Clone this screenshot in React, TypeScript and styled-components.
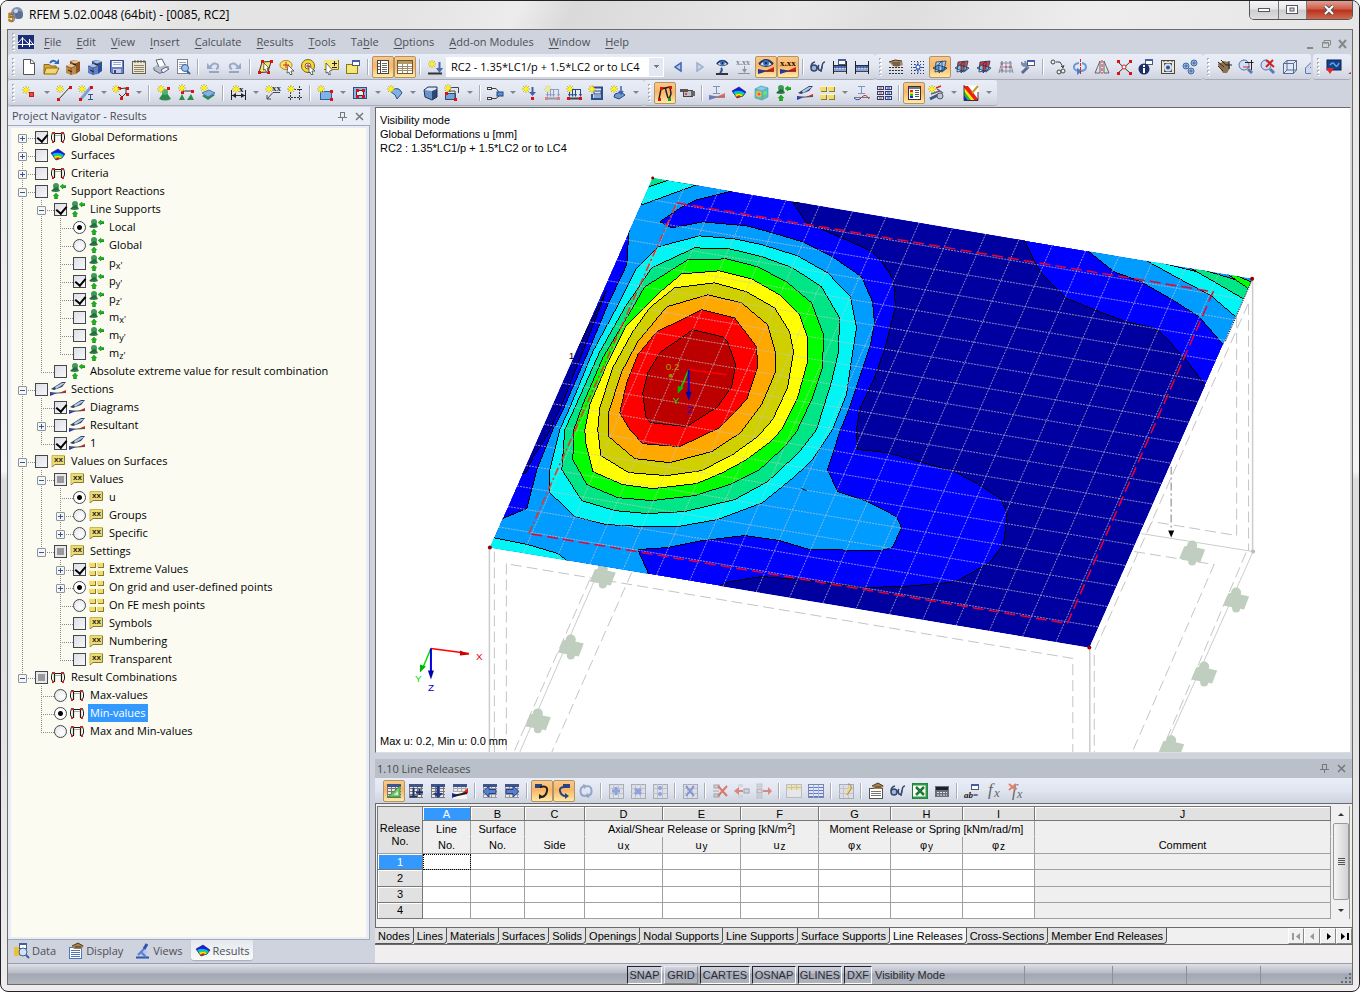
import React, { ReactNode } from "react";
import styled, { createGlobalStyle, css } from "styled-components";

const UI = `"Open Sans", "Noto Sans", sans-serif`;
const ARIAL = `"Liberation Sans", Arial, sans-serif`;

const Global = createGlobalStyle`
  * { box-sizing: border-box; }
  html, body { margin: 0; padding: 0; background: #fff; }
  body { font: 11px/16px ${UI}; color: #000; }
  button { font: inherit; color: inherit; padding: 0; border: 0; background: none; }
`;

/* ---------- drawing helpers for 16x16 icons ---------- */
const P = (d: string, s = "#333", w = 1, f = "none") => <path d={d} stroke={s} strokeWidth={w} fill={f} />;
const F = (d: string, f: string) => <path d={d} fill={f} />;
const R = (x: number, y: number, w: number, h: number, f: string, s = "none") => (
  <rect x={x} y={y} width={w} height={h} fill={f} stroke={s} />
);
const C = (x: number, y: number, r: number, f: string, s = "none", w = 1) => (
  <circle cx={x} cy={y} r={r} fill={f} stroke={s} strokeWidth={w} />
);
const T = (t: string, x: number, y: number, f = "#333", size = 8, extra = {}) => (
  <text x={x} y={y} fill={f} fontSize={size} fontFamily="Liberation Serif, serif" fontWeight="bold" {...extra}>{t}</text>
);
const star = (x = 4, y = 4) => (
  <g transform={`translate(${x} ${y})`}>
    {P("M0-4V4M-4 0H4M-3-3L3 3M3-3L-3 3", "#c4b41c", 1)}
    {C(0, 0, 2, "#fff21a")}
    {P("M0-3V3M-3 0H3", "#fff21a", 1)}
  </g>
);
const dot = (x: number, y: number) => R(x - 1, y - 1, 3, 3, "#e01010");
const wedge = (
  <g>
    {F("M0 15V10L8 11.500V12.500Z", "#1c2fc4")}
    {F("M7 12L16 8V13L7 13Z", "#e02020")}
    {P("M0 13L16 11", "#443", 1)}
  </g>
);
const eye = (
  <g>
    {F("M1 6Q8-2 15 6Q8 12 1 6", "#dfeaf8")}
    {P("M1 6Q8-2 15 6", "#1b3566", 2)}
    {P("M1 6Q8 11 15 6", "#1b3566")}
    {C(8, 5, 3, "#3c6fb8")}
    {C(8, 5, 1, "#0a1430")}
  </g>
);
const gridBase = (c = "#777") => (
  <g shapeRendering="crispEdges">
    {R(1, 2, 14, 13, "#e8e8e8")}
    {P("M1.500 2V15M5.500 2V15M9.500 2V15M13.500 2V15M1 5.500H15M1 8.500H15M1 11.500H15M1 14.500H15", c)}
    {R(1, 1, 14, 3, "#3f5488")}
  </g>
);
const fadedGrid = (
  <g shapeRendering="crispEdges">
    {R(1, 1, 14, 14, "#dcdfe6", "#a9acb4")}
    {P("M1 5.500H15M1 10.500H15M5.500 1V15M10.500 1V15", "#c0c3ca")}
  </g>
);
const cabinet = (a: string, b: string, c: string) => (
  <g>
    {F("M1 7L6 5L11 8V15L6 16L1 14Z", a)}
    {F("M5 2L11 1L15 3V12L11 15V7L5 5Z", b)}
    {F("M1 7L6 5L11 7L6 9ZM5 3L11 1L15 3L10 5Z", c)}
    {P("M3 11L7 13M8 5L11 6", "#2a1a0a")}
    {P("M1 7L6 9L11 7M6 9V16M5 3L10 5L15 3M10 5V7", "#3b3024", 0.6)}
  </g>
);
const plane = (a: string, b: string) => (
  <g>
    {F("M4 3L14 2L12 9L3 10Z", a)}
    {F("M1 9L6 6L15 9L10 13Z", b)}
    {F("M7 5L10 2V10L7 13Z", a)}
    {P("M4 3L14 2L12 11L3 13ZM1 9L6 6L15 9L10 13ZM7 5L10 2V11L7 14Z", "#17365e", 0.8)}
  </g>
);
const magnifier = (
  <g>
    {C(6, 6, 5, "#cfe0f5", "#5672a6", 1)}
    {P("M10 10L14 14", "#5b76b5", 3)}
  </g>
);
const load = (faded: boolean) => (
  <g opacity={faded ? 0.45 : 1}>
    {star(4, 4)}
    {P("M6 4.500H14.500M6.500 4V11M9.500 4V11M14.500 4V11M3.500 7V11", "#234a8a")}
    {F("M2 9H5L3.500 12ZM5 9H8L6.500 12ZM8 9H11L9.500 12ZM13 9H16L14.500 12Z", "#234a8a")}
    {P("M1 13.500H15", "#444", 2)}
    {dot(2, 13)}{dot(14, 13)}
  </g>
);
const support = (
  <g>
    {C(6, 3, 3, "#3f9a58")}
    {F("M5 4H8L10 8Q6 10 1 8Z", "#2b7b46")}
    {P("M2 8L5 6H8", "#205a35")}
    {F("M10 3.500L13 1V2.500H16V5H13V6Z", "#14b814")}
    {P("M10 3.500L13 1V2.500H15.500V4.500H13V6Z", "#1f7a1f", 0.5)}
    {F("M6 10L9 13H7.500V16H4.500V13H3Z", "#14b814")}
    {P("M6 10L8.500 13H7.500V15.500H4.500V13H3.500Z", "#1f7a1f", 0.5)}
  </g>
);
const frame = (
  <g>
    {P("M4.500 13V4.500H11.500V13", "#1c1c1c", 1.2)}
    {P("M5 6.500H11", "#aaa")}
    {P("M4 3.500H2.500Q1 7 1.500 10L3 13M12 3.500H13.500Q15 7 14.500 10L13 13", "#1c1c1c")}
    {R(3, 3, 2, 2, "#e02020")}{R(11, 3, 2, 2, "#e02020")}
    {R(2, 12, 2, 2, "#e02020")}{R(12, 12, 2, 2, "#e02020")}
  </g>
);
const surfaceColors = (
  <g>
    {F("M1 6L8 2L15 7L12 11L6 13Z", "#1818e0")}
    {F("M2 7Q8 4 14 8L12 11L6 13Z", "#00b4ff")}
    {F("M3 9Q8 6 13 9L12 11L6 13Z", "#30e030")}
    {F("M4 10Q8 8 12 10.500L6 13Z", "#ffe600")}
    {F("M5 12Q8 9 10 11.500L6 13Z", "#f02010")}
    {P("M1 6L8 2L15 7L12 11L6 13Z", "#225", 0.6)}
  </g>
);
const blade = (
  <g>
    {F("M0 15V11L7 12Z", "#1c2fc4")}
    {F("M9 12L16 9V12Z", "#e02020")}
    {P("M0 12.500L16 11.500", "#555")}
    {F("M1 8L12 1L16 1L12 6L4 9Z", "#30425f")}
    {F("M5 6L12 2L15 2L11 5L6 8Z", "#b4cdec")}
  </g>
);
const xx = (
  <g>
    {F("M2 2H15V11H5L2 14Z", "#ecdc72")}
    {P("M2 14V2.500H14.500", "#c8b850")}
    {P("M14.500 3V11.500H5L2 14", "#857736")}
    <text x="4" y="9" fontSize="8" fontWeight="bold" fontFamily="Liberation Sans" fill="#222">xx</text>
  </g>
);
const blocks = (
  <g>
    {[[1, 1], [9, 1], [1, 9], [9, 9]].map(([x, y]) => (
      <g key={`${x}${y}`}>
        {R(x + 1, y + 1, 6, 5, "#8a7a28")}
        {R(x, y, 6, 5, "#f0dc70")}
        {P(`M${x} ${y + 0.5}H${x + 6}`, "#fff6b8")}
      </g>
    ))}
  </g>
);
const curvedArrow = (c: string) => (
  <g>
    {P("M4 13H14", c, 2)}
    {P("M5 8Q9 2 13 6Q14 9 11 10", c, 2)}
    {F("M2 4V10H8Z", c)}
  </g>
);
const glasses = (
  <g>
    {C(4, 9, 3, "#9fb6dc", "#34466e", 1.5)}
    {P("M1 8Q1 4 5 3M7 9L9 8", "#34466e", 1.5)}
    {P("M9 6Q7 8 9 11Q11 12 12 9Q12 3 15 3M12 7L11 13", "#34466e", 1.5)}
  </g>
);
const beads = (
  <g>
    {R(1, 6, 14, 7, "#f4f4f4")}
    {P("M1.500 2V15M14.500 2V15M1 6.500H15M1 12.500H15", "#222")}
    {[3, 6, 9, 12].map((x) => <g key={x}>{C(x + 0.5, 8, 1.5, "#3558a8")}{C(x + 0.5, 11, 1.5, "#7b97d4")}</g>)}
  </g>
);
const windowMini = (x: number, y: number) => (
  <g>{R(x + 0.5, y + 0.5, 7, 5, "#fff", "#556")}{R(x, y, 8, 2, "#3f5fa8")}</g>
);
const floppy = (
  <g>
    {F("M1 1H15V15H3L1 13Z", "#6f82c9")}
    {R(3, 1, 10, 7, "#f5f7fb")}
    {P("M4 3.500H12M4 5.500H12", "#9aa9d0")}
    {R(4, 10, 8, 5, "#c5cad6")}{R(5, 11, 2, 4, "#39467c")}
    {P("M1.500 1.500H14.500V14.500H3L1.500 13Z", "#3b4a8b")}
  </g>
);

const icons: Record<string, ReactNode> = {
  "New": <g>{F("M3 1H10L13 4V15H3Z", "#fff")}{P("M2.500 0.500H10L13.500 4V15.500H2.500ZM9.500 1V4.500H13", "#555")}</g>,
  "Open": <g>{F("M1 5H6L8 7H14V15H1Z", "#d9a93a")}{F("M3 9H16L13 15H1Z", "#f4d66c")}{P("M1 15V5.500H6L8 7H13V9M3 9H16L13 15H1Z", "#8a6a18")}{P("M7 4Q10 0 13 3", "#2d6ab8", 2)}{F("M11 5H16V0Z", "#2d6ab8")}</g>,
  "Project manager": cabinet("#c28a48", "#8a5420", "#ecc48c"),
  "Block manager": cabinet("#5a80d0", "#2d4f98", "#a8c2f0"),
  "Save": floppy,
  "Project details": <g>{R(1.5, 2.5, 13, 12, "#efe6cf", "#6a6250")}{P("M3 6.500H13M3 8.500H13M3 10.500H13M3 12.500H13", "#8d856d")}{P("M4 1V4M7 1V4M10 1V4M13 1V4", "#555")}</g>,
  "Print": <g>{F("M2 7L10 3L15 8L7 14L1 11Z", "#b9bfca")}{F("M3 1L9 0L12 6L6 8Z", "#fff")}{P("M3 1L9 0L12 6M1 8V11L7 14.500L15 9V7M3 1L6 8", "#59606e")}{F("M8 11L13 8L16 10L10 14Z", "#e9f1ff")}{P("M8 11L13 8L16 10L10 14Z", "#57657f")}</g>,
  "Preview": <g>{R(2.5, 0.5, 10, 14, "#fff", "#7d8594")}{P("M4 3.500H11M4 5.500H11M4 7.500H8M4 9.500H7", "#9aa3b3")}{C(10, 9, 3.5, "#9cc4ee", "#3e5f94")}{P("M12 12L15 15", "#3e5f94", 2)}</g>,
  "Undo": <g opacity={0.55}>{curvedArrow("#5d79ac")}</g>,
  "Redo": <g opacity={0.55} transform="translate(16 0) scale(-1 1)">{curvedArrow("#5d79ac")}</g>,
  "Select plane": <g>{F("M5 3H14L11 13H2Z", "#f8e468")}{P("M5 3L14 2.500L11 13L2 13.500Z", "#333")}{dot(5, 2)}{dot(14, 2)}{dot(2, 13)}{dot(11, 13)}{F("M7 4L12 9L10 9L11 13L9 13L8 10L6 11Z", "#fff")}{P("M7 4L12 9L10 9L11 12L9 12.500L8 10L6.500 11Z", "#333", 0.7)}</g>,
  "Select ellipse": <g><ellipse cx="7" cy="6" rx="6" ry="4.500" fill="#f8e468" stroke="#b28c10" />{P("M7 3V9M4 6H10", "#d22")}{F("M9 6L15 12L12 12L13 16L11 15L10 13L8 14Z", "#fff")}{P("M9 6L15 12L12 12L13 15.500L11 15.500L10 13L8 14Z", "#333", 0.7)}</g>,
  "Select ring": <g>{C(7, 7, 5, "none", "#f8dc28", 3)}{C(7, 7, 6.5, "none", "#7b6210")}{C(7, 7, 3, "#fff", "#7b6210")}{P("M7 5V9M5 7H9", "#d22")}{F("M8 7L14 12L11 12L12 16L10 15L9 13L8 14Z", "#fff")}{P("M8 7L14 12L11 12L12 15.500L10 15.500L9 13L8 14Z", "#333", 0.7)}</g>,
  "Add to selection": <g>{R(1, 1, 15, 10, "#f5e67a")}{P("M15.500 1V10.500H1", "#87781a")}{P("M11.500 2V7M9 4.500H14M9 8.500H14", "#222")}{F("M3 4L10 11L7 12L8 16L6 15L5 13L3 14Z", "#fff")}{P("M3 4L9.500 11L6.500 12L7.500 15.500L5.500 15.500L5 13L3 14Z", "#333", 0.7)}</g>,
  "Selection window": <g>{R(1.5, 5.500, 11, 9, "#f5e67a", "#87781a")}{windowMini(7, 1)}</g>,
  "Navigator": <g>{R(2.500, 1.500, 11, 13, "#fff", "#444")}{P("M5.500 1V15", "#444")}{P("M7 4.500H12M7 6.500H12M7 8.500H12M7 10.500H12M7 12.500H12M3 4.500H5M3 7.500H5M3 10.500H5", "#666")}</g>,
  "Tables": <g>{R(0.500, 1.500, 15, 13, "#fff", "#6a5a36")}{R(1, 2, 14, 3, "#b09a62")}{P("M1 7.500H15M1 9.500H15M1 11.500H15M5.500 5V14M10.500 5V14", "#9a8d6c")}</g>,
  "New load case": <g>{star(5, 5)}{P("M12.500 3V10", "#4d6ba8", 2)}{F("M9 9H16L12.500 14Z", "#4d6ba8")}{P("M1 14.500H15", "#333", 2)}</g>,
  "Previous": <g>{F("M11 4V12L5 8Z", "#b4c8ee")}{P("M11 4V12L5 8Z", "#4064ac", 1.5)}</g>,
  "Next": <g opacity={0.8}>{F("M5 4V12L11 8Z", "#c4d0ea")}{P("M5 4V12L11 8Z", "#8c9fc8", 1.5)}</g>,
  "Show loads": <g>{P("M2 15H14", "#333", 2)}<g transform="translate(2 0) scale(.8)">{eye}</g>{P("M7 9Q9 11 6 14", "#27518f", 2)}</g>,
  "Show load values": <g opacity={0.55}>{T("x.xx", 0, 6)}{P("M8.500 7V12", "#555")}{F("M6 10H11L8.500 14Z", "#555")}{P("M2 14.500H14", "#555")}</g>,
  "Show results": <g>{wedge}<g transform="translate(0 -1)">{eye}</g></g>,
  "Show result values": <g>{wedge}{T("x.xx", 0, 7, "#201000", 9)}</g>,
  "Results glasses": glasses,
  "Calculation": <g>{beads}{windowMini(6, 0)}</g>,
  "Calculate all": beads,
  "Work plane": <g><path d="M1 8.500H15M1 11.500H15M1 14.500H15" stroke="#333" strokeDasharray="2 1" />{F("M1 3L6 1L14 2L15 6L9 8L5 7Z", "#a98a66")}{P("M1 3L7 1L14 2M4 4H12M5 6H12", "#4a3420")}</g>,
  "Grid": <g><path d="M1 2.500H15M1 5.500H15M1 8.500H15M1 11.500H15M1 14.500H15" stroke="#333" strokeDasharray="1 2" />{P("M8 3V14M3 8.500H13M5 5L11 12M11 5L5 12", "#2a57b4", 1)}{C(8, 8, 2, "#fff", "#2a57b4")}</g>,
  "Plane XY": plane("#a4cdf2", "#4d97d8"),
  "Plane YZ": plane("#d24a3f", "#7fc0ea"),
  "Plane XZ": plane("#e03333", "#8fbce8"),
  "Object snap": <g opacity={0.8}>{P("M4 2V14M8 2V14M12 2V14M2 4H14M2 8H14M1 12H15M4 2L1 14M12 2L15 14", "#6c7e9c")}{C(4, 5, 1, "#e22")}{C(8, 8, 1, "#e22")}{C(12, 8, 1, "#e22")}{C(4, 11, 1, "#e22")}</g>,
  "Settings": <g>{P("M2 14L8 8", "#5a6a8e", 3)}{P("M2 3Q1 7 6 7L9 9M5 2L6 5L3 5", "#7b8bb0", 2)}{windowMini(7, 1)}</g>,
  "Move copy": <g>{C(3, 3, 2, "#eee", "#444")}{C(9, 13, 2, "#eee", "#444")}{C(13, 12, 2, "#eee", "#444")}{P("M6 3H10L13 8M11 7L13 9L14 6", "#444")}</g>,
  "Rotate": <g>{P("M7 4Q1 5 2 9Q3 12 8 12Q14 12 14 8Q14 5 10 4", "#6c98da", 2)}{F("M5 9L10 12L5 16Z", "#4a7fca")}<path d="M8.500 0V16" stroke="#e02020" strokeDasharray="3 1" /></g>,
  "Mirror": <g>{P("M6 2V14H1ZM10 2V14H15Z", "#666")}<path d="M8 1V15" stroke="#e02020" strokeDasharray="3 1" /></g>,
  "Scale": <g>{P("M2 3L14 14M14 3L2 14", "#333")}{dot(2, 2)}{dot(14, 2)}{dot(2, 14)}{dot(14, 14)}{C(8, 8, 2, "#fff", "#d22")}</g>,
  "Info": <g>{windowMini(7, 0)}{C(6, 10, 5.5, "#1d2d66")}{R(5, 9, 2, 5, "#fff")}{R(5, 6, 2, 2, "#fff")}</g>,
  "Edit card": <g>{R(1.500, 1.500, 13, 13, "#efe6cf", "#4d4634")}{R(4, 4, 8, 9, "#3f5277")}{C(8, 8.500, 3, "none", "#cfe0ff", 2)}{P("M4 2V3M8 2V3M12 2V3", "#4d4634")}</g>,
  "Gears": <g>{[[4, 7], [9, 12], [12, 4]].map(([x, y]) => <g key={x}>{C(x, y, 3, "#9db9e2", "#4468a4")}{C(x, y, 1, "#e8f0ff", "#2f5597")}</g>)}</g>,
  "Pan": <g>{F("M2 6Q2 3 5 4L7 2L13 3L14 9L11 14H7Z", "#8c7350")}{P("M2 3L8 8M5 1L10 6M2 7L7 12", "#3d2c18")}{P("M13 2V10M10 6H16", "#222")}</g>,
  "Zoom window": <g>{magnifier}{P("M7 3.500H15.500M13.500 1V11", "#222")}{P("M5 8H12", "#d22")}</g>,
  "Zoom all": <g>{magnifier}{P("M6 1L14 8M13 1L6 8", "#d42020", 2)}</g>,
  "Isometric": <g>{F("M1 5L5 1H15V11L11 15H1Z", "#dfe9f8")}{P("M1.500 4.500H11.500V14.500H1.500ZM1.500 4.500L5 1.500H14.500V11L11.500 14.500M11.500 4.500L14.500 1.500M5 1.500V11H14.500M1.500 14.500L5 11", "#5b6c93")}</g>,
  "View X": <g>{F("M1 9L7 3V15H1Z", "#ccd8ee")}{P("M1.500 14V9L7 3.500H15M1.500 14.500H15M6 8.500H15", "#6377a4")}</g>,
  "Monitor": <g>{R(1, 1, 14, 10, "#173f8a", "#0c2352")}{P("M4 6Q7 2 9 6Q11 9 13 4", "#58a8ec", 1.5)}{F("M0 9H8L4 15Z", "#e02828")}</g>,
  "Report": F("M0 15H14V6Z", "#d02020"),

  "Node": <g>{star(5, 5)}{R(8, 7, 5, 5, "#b8201c")}{R(9, 8, 3, 3, "#f04a3c")}</g>,
  "Line": <g>{P("M3 14L14 2", "#333")}{dot(2, 14)}{dot(14, 2)}{star(4, 4)}</g>,
  "Member": <g>{P("M3 14L13 2", "#7fa0d0", 3)}{dot(2, 14)}{dot(13, 2)}{star(4, 4)}{P("M10 9.500H15M12.500 9V15M10 14.500H15", "#32508a")}</g>,
  "Polyline": <g>{P("M4 4L13 3V8L9 12L6 9", "#333")}{dot(6, 3)}{dot(14, 3)}{dot(14, 9)}{dot(8, 13)}{star(3, 4)}</g>,
  "Nodal support": <g>{F("M7 8H11L15 14Q9 17 3 14Z", "#2e8a4c")}{C(9, 7, 3, "#4bb26b")}{dot(12, 3)}{star(5, 4)}</g>,
  "Line support": <g>{P("M4 6H15", "#333")}{dot(4, 7)}{dot(14, 6)}{F("M1 15L4 9L7 15ZM9 15L13 9L16 15Z", "#2e8a4c")}{star(4, 3)}</g>,
  "Surface support": <g>{F("M2 11L9 7L15 10L8 15Z", "#2e8a4c")}{F("M2 8L9 5L15 8L8 12Z", "#7fb2e6")}{P("M2 8L9 5L15 8L8 12Z", "#4a78b0")}{star(4, 3)}</g>,
  "Dimension": <g>{P("M1.500 5V15M15.500 5V15M2 10.500H15", "#222")}{F("M2 10.500L6 8V13ZM15 10.500L11 8V13Z", "#222")}{T("x", 9, 7, "#222", 9)}{star(6, 4)}</g>,
  "Comment": <g>{P("M2 14L8 7.500H15M2 10V14H6", "#445")}{T("xx", 7, 6, "#333", 9)}{star(4, 4)}</g>,
  "Guideline": <g><path d="M3.500 1V15M12.500 1V15M1 4.500H15M1 12.500H15" stroke="#333" strokeDasharray="2 1" />{star(4, 4)}</g>,
  "Surface": <g>{R(3.500, 6.500, 11, 8, "#7fb2e6", "#3a5f96")}{dot(14, 6)}{dot(14, 14)}{star(4, 4)}</g>,
  "Opening": <g>{R(1.500, 2.500, 13, 11, "#8fb4e2", "#2a4f86")}{R(4.500, 5.500, 7, 5, "#e8eef8", "#333")}{dot(5, 5)}{dot(11, 5)}{dot(5, 11)}{dot(11, 11)}</g>,
  "Curved surface": <g>{F("M5 5Q12 1 15 8L10 14Q9 9 4 7Z", "#7fb0e6")}{P("M5 5Q12 1 15 8L10 14Q9 9 4 7Z", "#2a4f86")}{star(4, 4)}</g>,
  "Solid": <g>{F("M2 5L10 4V15L3 12Z", "#6d93c6")}{F("M10 5L15 3V12L10 15Z", "#2c4a78")}{F("M2 5L6 2H15V4L10 6Z", "#dce8f8")}{P("M2 5L6 2H15V12L10 15L3 12Z", "#1d3256")}</g>,
  "Extrude": <g>{R(1, 8, 10, 7, "#6fa6e0")}{P("M1.500 8.500H11.500V14.500H1.500ZM6 7V2.500H14.500V8M11 14V6H4", "#445")}{dot(2, 8)}{dot(11, 14)}{star(4, 3)}</g>,
  "Connect": <g>{P("M4 3.500H9L12 7M4 13.500H9L12 11", "#444")}{R(0.500, 2.500, 4, 2, "#fff", "#444")}{R(0.500, 12.500, 4, 2, "#fff", "#444")}{R(10, 7, 6, 4, "#5a8fd4", "#23477f")}</g>,
  "Nodal load": <g>{star(4, 4)}{P("M10.500 2V8", "#3d64a8", 2)}{F("M7 7H14L10.500 11Z", "#3d64a8")}{dot(10, 13)}</g>,
  "Member load": load(true),
  "Surface load": load(false),
  "Solid load": <g>{P("M4 2.500H14V14H4V9", "#2f4d86", 2)}{R(6, 6, 7, 3, "#cfe0f6", "#2f4d86")}{R(6, 10, 7, 3, "#88a8da")}{star(4, 4)}</g>,
  "Free load": <g>{F("M5 9L11 7L15 10L9 14L4 12Z", "#6d9bd6")}{P("M5 9L11 7L15 10L9 14L4 12Z", "#28477c")}{P("M11 1V8M9 6L11 9L13 6", "#3d64a8", 1.5)}{star(4, 4)}</g>,
  "Deformations": <g>{P("M2 14L4 4L13 2L14 9L12 14M4 4Q9 1 9 6L11 13", "#222", 1.5)}{dot(4, 3)}{dot(13, 2)}{dot(2, 14)}{R(11, 13, 3, 3, "#1c9a1c")}</g>,
  "Animation": <g>{R(4.500, 5.500, 9, 6, "#bfc0c4", "#444")}{R(1, 4, 8, 3, "#555")}{R(12, 6, 4, 5, "#666")}{C(7, 9, 1, "#d22")}</g>,
  "Internal forces": <g><g opacity={0.6}>{wedge}</g>{P("M4 1.500H11M7.500 2V8M4 8.500H11", "#7d93bf")}</g>,
  "Surface results": surfaceColors,
  "Solid results": <g>{F("M2 4L8 1L15 3V12L9 15L2 13Z", "#5fc0a8")}{F("M2 4L8 1L15 3L9 6Z", "#7fd0ea")}{C(6, 9, 3, "#f0c040")}{C(6, 9, 1.500, "#f05040")}{C(12, 8, 2, "#60e090")}{P("M2 4L8 1L15 3V12L9 15L2 13ZM9 6V15M2 4L9 6L15 3", "#5a9bc0", 0.7)}</g>,
  "Support reactions": support,
  "Sections": blade,
  "Values": blocks,
  "Result diagram": <g>{P("M4 1.500H11M7.500 2V8M4 8.500H11", "#7d93bf")}{P("M0 13Q4 17 8 12", "#2a4fd0")}{P("M8 12Q12 8 15 14", "#e02020")}{P("M0 12.500H16", "#777")}</g>,
  "Result tables": <g>{[1, 6, 11].map((y) => <g key={y}>{R(1.5, y + 0.5, 6, 3, "#dfe5f2", "#2f3d6a")}{R(9.5, y + 0.5, 6, 3, "#dfe5f2", "#2f3d6a")}{P(`M3 ${y + 2}H6`, "#d33")}{P(`M11 ${y + 2}H14`, "#33d")}</g>)}</g>,
  "Panel": <g>{R(2.500, 1.500, 12, 13, "#fff", "#333")}{R(3, 2, 11, 2, "#777")}{R(4, 5, 3, 2, "#e22")}{R(4, 7, 3, 2, "#fc0")}{R(4, 9, 3, 2, "#2c2")}{R(4, 11, 3, 2, "#22e")}{P("M9 5.500H13M9 7.500H13M9 9.500H13M9 11.500H13", "#555")}</g>,
  "Result settings": <g>{P("M2 14L10 10", "#3a5584", 3)}{P("M3 9L12 6M9 4L15 8", "#666", 1.5)}{C(12, 11, 3, "#bcc6da", "#556")}{P("M8 3L13 1", "#d22", 1.5)}{star(4, 4)}</g>,
  "Color scale": <g>{R(0.500, 0.500, 15, 15, "#fff")}{F("M1 1H5L15 14V15H11L1 3Z", "#f02010")}{F("M1 3L11 15H8L1 6Z", "#ffe600")}{F("M1 6L8 15H5L1 10Z", "#20c020")}{F("M1 10L5 15H1Z", "#2020e0")}{P("M1 0V15.500H15V7", "#333")}{P("M9 8L15 1", "#c79a28", 2)}</g>,

  "View mode": <g>{gridBase()}{F("M2 14H14V3Z", "#74cc68")}{P("M2 14H14V3Z", "#3a8a38")}{F("M8 12H12V8Z", "#e8e8e8")}</g>,
  "Insert row": <g>{gridBase()}{P("M5.500 5V13M2 13.500H9M11.500 6V12M8 9.500H15", "#1d2f6a", 2)}</g>,
  "Sort": <g>{gridBase()}{P("M8 3V12", "#233a86", 3)}{F("M3 10H13L8 15Z", "#233a86")}</g>,
  "Diagram": <g>{gridBase("#aaa")}{R(1, 9, 14, 7, "#f5f5f5")}{F("M0 15V10L7 12Z", "#1c2fc4")}{F("M8 12L16 5V10Z", "#e02020")}{P("M1 13L15 10", "#222", 2)}</g>,
  "Previous table": <g>{gridBase("#999")}{F("M1 8.500L7 3V6.500H14V10.500H7V14Z", "#5a80cc")}{P("M1 8.500L7 3V6.500H14V10.500H7V14Z", "#24418a")}</g>,
  "Next table": <g>{gridBase("#999")}{F("M15 8.500L9 3V6.500H2V10.500H9V14Z", "#5a80cc")}{P("M15 8.500L9 3V6.500H2V10.500H9V14Z", "#24418a")}</g>,
  "Sync selection": <g>{R(1, 1, 7, 4, "#2b437e")}{P("M6 4Q14 2 13 8Q12 13 8 14", "#222", 2)}{F("M5 11V16L10 14Z", "#222")}</g>,
  "Sync view": <g>{R(7, 1, 7, 4, "#2b437e")}{P("M9 4Q3 4 4 8Q5 13 10 13", "#2b437e", 2)}{F("M9 10V16L13 13Z", "#2b437e")}</g>,
  "Refresh": <g opacity={0.5}>{P("M6 3Q1 5 3 11Q4 13 7 13M10 13Q15 11 13 5Q12 3 9 3", "#4a6aa6", 2)}{F("M5 1L10 3L6 6ZM11 15L6 13L10 10Z", "#4a6aa6")}</g>,
  "Add": <g>{fadedGrid}{P("M8 4V12M4 8H12", "#8fa2e0", 3)}</g>,
  "Cross": <g>{fadedGrid}{P("M5 6L11 11M11 6L5 11", "#8fa2e0", 3)}</g>,
  "Divide": <g>{fadedGrid}{C(8, 5, 2, "#8fa2e0")}{C(8, 11, 2, "#8fa2e0")}</g>,
  "Clear": <g>{fadedGrid}{P("M4 3L12 13M12 3L4 13", "#7f94d6", 2)}</g>,
  "Delete row": <g opacity={0.7}>{R(2, 2, 5, 3, "#ccc", "#888")}{R(2, 11, 5, 3, "#ccc", "#888")}{P("M1 8H7", "#888")}{P("M6 3L15 13M15 3L6 13", "#d84a3a", 2)}</g>,
  "Move left": <g opacity={0.6}>{F("M0 8L5 4V7H9V9H5V12Z", "#d84a3a")}{R(10, 6, 5, 4, "#ccc", "#777")}{R(4, 1, 5, 3, "#ccc")}{R(4, 12, 5, 3, "#ccc")}</g>,
  "Move right": <g opacity={0.6}>{F("M16 8L12 4V7H7V9H12V12Z", "#d84a3a")}{R(1, 1, 5, 3, "#ccc", "#aaa")}{R(1, 6, 5, 4, "#ccc", "#888")}{R(1, 12, 5, 3, "#ccc", "#aaa")}</g>,
  "Highlight": <g opacity={0.8}>{R(0.500, 1.500, 15, 13, "#e8e8ea", "#b4b4b8")}{R(1, 2, 14, 5, "#efe0a0")}{P("M1 4.500H15M5.500 2V7M10.500 2V7", "#c8bc88")}</g>,
  "Filter": <g>{R(0.500, 1.500, 15, 13, "#dfe6f8", "#7a86a8")}{P("M1 4.500H15M1 7.500H15M1 10.500H15M1 13.500H15", "#6278cc")}{P("M5.500 2V15M10.500 2V15", "#aab4d0")}</g>,
  "Edit note": <g>{fadedGrid}{F("M7 13L10 5L14 3L12 9Z", "#ecd88a")}{P("M10 1Q14 1 13 6L9 12", "#a88a20")}</g>,
  "Properties": <g>{R(1.500, 5.500, 13, 10, "#fff", "#555")}{P("M3 8.500H13M3 10.500H13M3 12.500H13", "#777")}{F("M4 3L10 0L16 3L13 6H6Z", "#a98358")}{P("M4 3L10 0L15 3M7 4H13", "#4a3420")}</g>,
  "View glasses": glasses,
  "Excel": <g>{R(0.500, 0.500, 15, 15, "#fff", "#1e7a33")}{P("M1 1.500H15M1 14.500H15M14.500 1V15", "#2f9a48", 2)}{P("M4 4L12 12M12 4L4 12", "#1e7a33", 2.5)}</g>,
  "Calculator": <g>{R(1, 3, 14, 11, "#6a6e78")}{R(2, 4, 12, 3, "#1d2028")}{P("M3 9.500H13M3 12H13", "#e8e8e8", 1)}<path d="M5.500 8V14M8.500 8V14M11.500 8V14" stroke="#6a6e78" /></g>,
  "Rename": <g>{windowMini(7, 1)}{T("ab=", 0, 15, "#111", 9, { fontStyle: "italic" })}</g>,
  "Function": <g>{T("f", 2, 12, "#666", 17, { fontStyle: "italic", fontWeight: "normal" })}{T("x", 8, 14, "#666", 13, { fontStyle: "italic", fontWeight: "normal" })}</g>,
  "Delete function": <g>{T("f", 4, 13, "#666", 16, { fontStyle: "italic", fontWeight: "normal" })}{T("x", 9, 15, "#666", 12, { fontStyle: "italic", fontWeight: "normal" })}{P("M1 1L8 7M8 1L1 7", "#e08070", 2)}</g>,

  frame, surf: surfaceColors, support, blade, xx, blocks,
  logo: <g>{C(9, 6, 6, "#8292b0")}{C(11, 8, 4, "#5a7099")}{C(8, 4, 2, "#cdd7ea")}<text x="0" y="15" fontSize="12" fontWeight="bold" fontFamily="Liberation Sans" fill="#d8a224" stroke="#5a3c08" strokeWidth=".5">5</text></g>,
  data: <g>{F("M0 4H5L6 6H9V13H0Z", "#e8c23a")}{windowMini(5, 0)}{C(9, 9, 4, "#cfe2f8", "#3e5f94")}{P("M12 12L15 15", "#3e5f94", 2)}</g>,
  display: <g>{R(1.500, 4.500, 12, 11, "#fff", "#4a78b8")}{P("M3 7.500H12M3 9.500H12M3 11.500H12M3 13.500H12", "#4a78b8")}{F("M4 3L10 0L16 3L13 6H6Z", "#a98358")}{P("M4 3L10 0L15 3M7 4H13", "#4a3420")}</g>,
  views: <g>{F("M2 12L9 5L13 9L9 13Z", "#b4c8f0")}{P("M1 14.500H14", "#2f55b0", 2)}{P("M3 12L9 6M6 9L11 14", "#5a7fd0", 2)}{P("M9 6L12 1", "#2f55b0", 3)}</g>,
};

const IconSvg = styled.svg`display: block; flex: none; width: 16px; height: 16px; overflow: visible;`;
const Icon = ({ name }: { name: string }) => (
  <IconSvg viewBox="0 0 16 16" aria-hidden="true">{icons[name]}</IconSvg>
);

/* ---------- window ---------- */
const Frame = styled.div`
  height: 100vh; min-height: 720px; padding: 0 6px 6px; display: flex; flex-direction: column;
  border: 1px solid #23212a; border-radius: 8px; overflow: hidden;
  background: linear-gradient(#f4f4f4, #e6e6e6 28px, #f0eeee 300px, #f6f4f4 470px, #dcdcdc 480px, #eeecec);
`;
const TitleBar = styled.header`
  display: flex; align-items: center; height: 28px; flex: none; margin: 0 -6px; padding: 0 6px 0 7px;
  background: linear-gradient(115deg, #f0f0f0 0 8%, #e4e4e4 14% 30%, #ececec 38%, #dadada 42%, #e8e8e8 58%, #dedede 66%, #ededed 80%, #e6e6e6);
`;
const TitleText = styled.h1`margin: 0 auto 0 5px; font-size: 12px; font-weight: 400; line-height: 16px;`;
const WinButtons = styled.div`
  display: flex; align-self: flex-start; height: 19px; border: 1px solid #555; border-top: 0;
  border-radius: 0 0 5px 5px; overflow: hidden;
`;
const WinButton = styled.button<{ $close?: boolean }>`
  display: grid; place-items: center; width: ${(p) => (p.$close ? 46 : 28)}px; height: 18px;
  & + & { border-left: 1px solid #777; }
  background: ${(p) => (p.$close ? "linear-gradient(#e0a195, #cf5a48 45%, #b8301c 50%, #cf6a50)" : "linear-gradient(#f6f6f6, #e6e6e6 45%, #cdcdcd 50%, #dedede)")};
`;
const Client = styled.div`
  flex: 1; min-height: 0; display: flex; flex-direction: column; border: 1px solid #6b6b66; background: #cfd3dd;
`;
const Grip = styled.span`
  flex: none; width: 10px; height: 18px; margin: auto 0;
  background:
    repeating-linear-gradient(#fff 0 2px, transparent 2px 4px) 5px 1px / 2px 17px no-repeat,
    repeating-linear-gradient(#a9aebb 0 2px, transparent 2px 4px) 4px 0 / 2px 17px no-repeat;
`;
const MenuBar = styled.nav`display: flex; align-items: center; height: 24px; flex: none; color: #4c4f58;`;
const MenuIcon = styled.svg`width: 16px; height: 14px; margin-right: 10px;`;
const MenuItem = styled.button`
  margin-right: 15px; white-space: nowrap;
  u { text-underline-offset: 2px; }
`;
const MdiButtons = styled.div`margin-left: auto; display: flex; gap: 2px; padding: 4px 3px 0 0; svg { display: block; }`;

/* ---------- toolbars ---------- */
const ToolRow = styled.div<{ $last?: boolean }>`
  display: flex; height: 26px; flex: none; overflow: hidden; margin-bottom: ${(p) => (p.$last ? 1 : 0)}px;
`;
const ToolGroup = styled.div<{ $cut?: boolean; $rest?: boolean }>`
  display: flex; align-items: center; padding-right: 2px; overflow: hidden;
  flex: none;
  ${(p) => p.$cut && "width: 108px; margin-right: 2px;"}
  ${(p) => p.$rest && "flex: 1; min-width: 0; margin-right: 1px;"}
  border-radius: 3px; border-bottom: 1px solid #a8abb4;
  background: linear-gradient(#e9edf7, #e2e6f0 50%, #ced3df);
`;
const ToolButton = styled.button<{ $on?: boolean }>`
  display: grid; place-items: center; flex: none; width: 22px; height: 22px; border-radius: 2px;
  ${(p) => p.$on && css`border: 1px solid #b09468; background: linear-gradient(#fbc98a, #f9b565 45%, #ffe9a8);`}
`;
const Arrow = styled.button`
  display: grid; place-items: center; flex: none; width: 13px; height: 22px;
  &::after { content: ""; border: 3px solid transparent; border-top: 3px solid #82858c; border-bottom: 0; }
`;
const Sep = styled.span`
  flex: none; width: 8px; height: 16px;
  background: linear-gradient(90deg, #a9adb7 50%, #fff 50%) 3px 0 / 2px 100% no-repeat;
`;
const CaseBox = styled.label`flex: none; display: flex; width: 218px; height: 20px; margin: 0 3px 0 0; background: #fff;`;
const CaseSelect = styled.select`
  flex: 1; min-width: 0; border: 0; padding: 0 20px 0 5px; appearance: none; font: 11px/18px ${UI}; color: #000;
  background:
    linear-gradient(#75787e, #75787e) right 5px top 8px / 5px 1px no-repeat,
    linear-gradient(#75787e, #75787e) right 6px top 9px / 3px 1px no-repeat,
    linear-gradient(#75787e, #75787e) right 7px top 10px / 1px 1px no-repeat,
    linear-gradient(#e3e8f2, #e3e8f2) right 1px center / 14px 18px no-repeat, #fff;
`;

/* entries: icon name, "|" separator, "v" drop-down arrow, "*" prefix for pressed */
const Tools = ({ items }: { items: string }) => (
  <>
    {items.split(",").map((it, i) => {
      if (it === "|") return <Sep key={i} />;
      if (it === "v") return <Arrow key={i} aria-label="More" />;
      const on = it[0] === "*";
      const name = on ? it.slice(1) : it;
      return <ToolButton key={i} $on={on} aria-label={name} aria-pressed={on || undefined}><Icon name={name} /></ToolButton>;
    })}
  </>
);

/* ---------- layout ---------- */
const Main = styled.div`flex: 1; min-height: 0; display: flex; gap: 5px;`;
const Side = styled.aside`width: 362px; flex: none; display: flex; flex-direction: column;`;
const PanelTitle = styled.div<{ $dark?: boolean }>`
  display: flex; align-items: center; justify-content: space-between; flex: none; height: ${(p) => (p.$dark ? 19 : 18)}px; color: #4a4a4e;
  padding: 0 5px 0 ${(p) => (p.$dark ? 2 : 4)}px; background: ${(p) => (p.$dark ? "#b9c0ca" : "#e8edf7")};
`;
const TitleButtons = styled.div`display: flex; gap: 6px; svg { display: block; }`;
const TreeBox = styled.div`
  flex: 1; min-height: 0; overflow: hidden; border: solid #a4a9b5; border-width: 1px 1px 1px 0;
  padding: 2px 3px; background: #e8edf7;
`;
const Tree = styled.ul`height: 100%; margin: 0; padding: 0 0 0 2px; list-style: none; background: #fbfbf2;`;
const Row = styled.li`display: flex; align-items: center; height: 18px; white-space: nowrap;`;
const Guide = styled.span<{ $v: "none" | "full" | "top" | "bottom"; $h?: boolean }>`
  flex: none; display: flex; align-items: center; width: ${(p) => (p.$h ? 22 : 19)}px; height: 18px; padding: 2px 0 0 5px;
  background:
    repeating-linear-gradient(#8a8a8a 0 1px, transparent 1px 2px) 9px ${(p) => (p.$v === "bottom" ? "10px" : "0")} /
      1px ${(p) => ({ none: 0, full: 18, top: 10, bottom: 8 }[p.$v])}px no-repeat,
    repeating-linear-gradient(90deg, #8a8a8a 0 1px, transparent 1px 2px) 9px 10px / ${(p) => (p.$h ? 13 : 0)}px 1px no-repeat;
`;
const Expander = styled.button<{ $open: boolean }>`
  width: 9px; height: 9px; border: 1px solid #8e929c; border-radius: 1px;
  background:
    linear-gradient(#3056a8, #3056a8) center / 5px 1px no-repeat,
    linear-gradient(#3056a8, #3056a8) center / ${(p) => (p.$open ? "0 0" : "1px 5px")} no-repeat, #f6f6f2;
`;
const Check = styled.input`
  appearance: none; flex: none; width: 13px; height: 13px; margin: 0 2px 0 0; border: 1px solid #45474c;
  background: linear-gradient(135deg, #dcdfe6, #f6f7f9);
  &:checked::after {
    content: ""; display: block; width: 5px; height: 8px; margin: 0 0 0 3px;
    border: solid #000; border-width: 0 2px 2px 0; transform: rotate(40deg);
  }
  &.mixed { background: linear-gradient(#9a9a9a, #9a9a9a) center / 7px 7px no-repeat, #e6e8ec; }
`;
const Radio = styled.input`
  appearance: none; flex: none; width: 13px; height: 13px; margin: 0 2px 0 0; border: 1px solid #45474c; border-radius: 50%;
  background: radial-gradient(circle at 60% 60%, #fff, #dfe1e6);
  &:checked { background: radial-gradient(circle, #000 0 2px, #fff 3px); }
`;
const RowLabel = styled.label<{ $sel?: boolean }>`
  margin-left: 3px; padding: 0 2px; line-height: 18px;
  background: ${(p) => (p.$sel ? "#3399ff" : "transparent")}; color: ${(p) => (p.$sel ? "#fff" : "#000")};
  sub { font-size: 9px; line-height: 9px; vertical-align: -2px; }
`;

type Node = [level: number, control: "c" | "C" | "m" | "r" | "R", icon: string, label: string, exp?: "+" | "-"];
const tree: Node[] = [
  [0, "C", "frame", "Global Deformations", "+"], [0, "c", "surf", "Surfaces", "+"], [0, "c", "frame", "Criteria", "+"],
  [0, "c", "support", "Support Reactions", "-"], [1, "C", "support", "Line Supports", "-"],
  [2, "R", "support", "Local"], [2, "r", "support", "Global"], [2, "c", "support", "p_x'"], [2, "C", "support", "p_y'"],
  [2, "C", "support", "p_z'"], [2, "c", "support", "m_x'"], [2, "c", "support", "m_y'"], [2, "c", "support", "m_z'"],
  [1, "c", "support", "Absolute extreme value for result combination"],
  [0, "c", "blade", "Sections", "-"], [1, "C", "blade", "Diagrams"], [1, "c", "blade", "Resultant", "+"], [1, "C", "blade", "1"],
  [0, "c", "xx", "Values on Surfaces", "-"], [1, "m", "xx", "Values", "-"], [2, "R", "xx", "u"], [2, "r", "xx", "Groups", "+"],
  [2, "r", "xx", "Specific", "+"], [1, "m", "xx", "Settings", "-"], [2, "C", "blocks", "Extreme Values", "+"],
  [2, "R", "blocks", "On grid and user-defined points", "+"], [2, "r", "blocks", "On FE mesh points"],
  [2, "c", "xx", "Symbols"], [2, "c", "xx", "Numbering"], [2, "c", "xx", "Transparent"],
  [0, "m", "frame", "Result Combinations", "-"], [1, "r", "frame", "Max-values"], [1, "R", "frame", "Min-values"],
  [1, "r", "frame", "Max and Min-values"],
];
const continues = (i: number, level: number) => {
  for (let j = i + 1; j < tree.length; j++) {
    if (tree[j][0] === level) return true;
    if (tree[j][0] < level) return false;
  }
  return false;
};
const TreeRow = ({ node, i }: { node: Node; i: number }) => {
  const [level, ctl, icon, label, exp] = node;
  const id = `node-${i}`;
  const [base, sub] = label.split("_");
  const on = ctl === "C" || ctl === "R";
  const more = continues(i, level);
  return (
    <Row>
      {Array.from({ length: level }, (_, l) => <Guide key={l} $v={continues(i, l) ? "full" : "none"} />)}
      <Guide $h $v={i === 0 ? "bottom" : more ? "full" : "top"}>
        {exp && <Expander $open={exp === "-"} aria-label={exp === "-" ? "Collapse" : "Expand"} />}
      </Guide>
      {ctl.toLowerCase() === "r"
        ? <Radio type="radio" id={id} checked={on} readOnly />
        : <Check type="checkbox" id={id} checked={on} readOnly className={ctl === "m" ? "mixed" : undefined} />}
      <Icon name={icon} />
      <RowLabel htmlFor={id} $sel={label === "Min-values"}>{base}{sub && <sub>{sub}</sub>}</RowLabel>
    </Row>
  );
};

const SideTabs = styled.div`display: flex; height: 23px; flex: none; padding-left: 2px; gap: 4px; color: #4c4f58;`;
const SideTab = styled.button<{ $on?: boolean }>`
  display: flex; align-items: center; gap: 2px; height: 20px; padding: 2px 4px 0; border-radius: 0 0 3px 3px;
  ${(p) => p.$on && css`background: linear-gradient(#e4e8ee, #fafafa); box-shadow: 0 1px 1px #a8acb6;`}
`;

const Work = styled.main`flex: 1; min-width: 0; display: flex; flex-direction: column;`;
const View = styled.section`
  position: relative; flex: 1; min-height: 0; margin-right: 1px; overflow: hidden; background: #fff;
  border: solid; border-width: 1px; border-color: #6b6b66 #dcdcdc #dcdcdc #6b6b66;
`;
const Canvas = styled.svg`position: absolute; left: 0; top: 0; width: 100%; height: 100%; font-family: ${ARIAL};`;
const Note = styled.p<{ $bottom?: boolean }>`
  position: absolute; left: 4px; ${(p) => (p.$bottom ? "bottom: 4px" : "top: 5px")}; margin: 0;
  font: 11px/14px ${ARIAL}; white-space: pre;
`;

/* ---------- result plot ---------- */
const PLATE = "653,178 1253,279 1090,648 490,548";
const bands: [string, string[]][] = [
  ["#0000a0", [
    "793,202 807,223 847,240 873,252 883,263 894,280 896,307 885,350 875,378 860,410 857,430 858,450 887,453 920,462 955,472 983,487 1002,500 1007,512 1007,522 1004,545 990,563 957,582 940,584 903,587 865,588 800,580 762,577 725,583 716,590 716,660 1095,660 1215,387 1207,387 1187,360 1162,333 1153,328 1127,322 1098,311 1066,298 1042,273 1036,263 1023,236 1000,220",
    "607,290 583,352 562,405 548,435 533,458 526,474 515,474",
  ]],
  ["#009cff", [
    "737,190 697,200 682,207 660,222 672,228 703,222 747,226 773,233 803,242 833,257 862,277 873,302 875,323 871,345 860,378 850,408 841,430 828,470 838,492 868,502 897,517 902,528 893,548 882,551 810,550 780,541 745,536 703,541 668,548 638,550 650,577 490,560 480,548 500,520 527,509 537,470 553,430 562,413 588,353 608,305 627,265 629,233 640,178",
    "1085,248 1115,272 1142,282 1175,301 1200,317 1226,347 1270,300 1260,270",
  ]],
  ["#00f5f5", [
    "702,183 642,205 630,170 700,170",
    "1142,258 1182,280 1212,296 1240,320 1270,290",
    "480,537 493,538 528,545 558,554 570,563 480,560",
    "700,236 735,239 763,245 798,256 828,273 851,297 857,328 852,360 847,395 833,430 813,460 795,477 763,503 718,520 678,527 643,527 607,525 575,517 550,493 550,470 560,430 570,408 593,352 620,302 637,268 658,247",
  ]],
  ["#00e686", [
    "670,180 649,187 640,170",
    "1187,265 1191,268 1246,300 1270,290",
    "695,248 730,249 763,257 793,268 822,287 840,318 839,352 832,382 817,430 800,452 768,482 735,500 685,512 647,514 615,511 582,501 562,470 565,430 575,408 600,352 625,308 652,268",
  ]],
  ["#00ff00", [
    "1224,270 1228,274 1251,290 1270,290",
    "688,260 727,259 758,267 787,282 812,303 824,335 823,368 813,398 797,432 785,447 760,470 730,485 695,496 652,501 618,498 587,485 573,460 574,430 583,405 603,358 627,318 645,287",
  ]],
  ["#ffff00", ["682,274 720,271 752,279 780,295 800,315 808,338 808,362 798,398 782,430 772,441 747,460 723,473 697,484 653,489 623,485 593,472 586,443 585,430 590,405 607,365 627,325 657,295"]],
  ["#d0d000", ["675,288 715,283 747,292 775,308 790,332 794,352 788,388 773,420 758,437 733,455 702,471 667,476 629,473 601,456 598,430 600,408 613,368 633,332 650,308"]],
  ["#ffa800", ["667,307 708,295 742,303 768,325 776,353 776,372 762,405 741,433 712,452 670,463 635,459 609,437 609,412 622,372 638,342"]],
  ["#ff0000", ["702,310 735,318 757,347 758,368 747,400 720,428 680,447 643,444 630,430 620,413 627,383 638,355 657,332"]],
  ["#bc0000", ["693,330 723,337 728,342 736,365 732,387 718,407 687,427 651,423 646,417 643,393 648,373 660,353"]],
];
const supports = [[603, 576], [571, 647], [538, 721], [1193, 553], [1237, 600], [1205, 674], [1172, 748]];
const steps = Array.from({ length: 17 }, (_, k) => (k + 1) / 18);

const Axes = ({ x, y, tip = true }: { x: number; y: number; tip?: boolean }) => (
  <g transform={`translate(${x} ${y})`} strokeWidth="1.500">
    <path d="M0 0L38 5" stroke="#ff0000" />
    {tip && <path d="M29 2L39 6L29 7Z" fill="#d00000" />}
    <path d="M0 0L-8 19" stroke="#00e000" />
    <path d="M-11 24L-11 16L-5 18Z" fill="#00b400" />
    <path d="M0 0V24" stroke="#0000e0" strokeWidth="2" />
    <path d="M-3 22H3L0 31Z" fill="#0000b0" />
  </g>
);

const Plot = () => (
  <Canvas viewBox="376 108 975 645" preserveAspectRatio="xMinYMin slice" role="img" aria-label="Global deformations">
    <defs><clipPath id="plate"><polygon points={PLATE} /></clipPath></defs>
    <g fill="none" stroke="#cccccc">
      <path d="M1253.500 280V552M489.500 548V760M1090.500 648V760" strokeWidth="1.500" />
      <path d="M1142 534L1254 552L1163 755M595 580L519 755" />
      <g strokeDasharray="11 5" stroke="#c4c4c4">
        <path d="M1249.500 304V551M1237.500 317V536L1153 522L1146 536M1249 304L1095 652V760M494.500 552V760M506.500 564V760M511 565L1073.500 659V760" />
        <path d="M1135 552L1215 565L1132 755M1247 553L1161 755M590 580L513 755M632 573L551 755" />
      </g>
    </g>
    <path d="M1172 467V530" stroke="#a8a8b0" strokeWidth="1.500" strokeDasharray="8 3 2 3" />
    <path d="M1169 531H1175L1172 538Z" />
    <circle cx="1254" cy="552" r="2" fill="#bbb" />
    {supports.map(([x, y]) => (
      <g key={x} transform={`translate(${x} ${y})`} fill="#c0cec0">
        <circle cy="-7" r="5" /><path d="M-8-6L-4-7L13-3L8 10L-13 6Z" /><circle cy="9" r="4" />
      </g>
    ))}
    <g clipPath="url(#plate)">
      <g shapeRendering="crispEdges">
        <polygon points={PLATE} fill="#0000ff" />
        {bands.map(([fill, shapes]) => shapes.map((pts) => (
          <polygon key={pts} points={pts} fill={fill} stroke="#000" />
        )))}
      </g>
      <g stroke="#c4c4c8" strokeOpacity=".7" strokeDasharray="2 1">
        {steps.map((t) => (
          <g key={t}>
            <line x1={653 + 600 * t} y1={178 + 101 * t} x2={490 + 600 * t} y2={548 + 100 * t} />
            <line x1={653 - 163 * t} y1={178 + 370 * t} x2={1253 - 163 * t} y2={279 + 369 * t} />
          </g>
        ))}
      </g>
      <path d="M677 203L1214 292L1068 624L529 534" fill="none" stroke="#f00030" strokeWidth="1.500" strokeDasharray="11 5" />
      <path d="M529 534L677 203" stroke="#f03020" strokeWidth="1.500" strokeDasharray="8 3 2 3" />
    </g>
    <path d="M1253 280L1226 342" stroke="#000" strokeDasharray="1 1" />
    <path d="M802 489L807 491" stroke="#000" />
    <g fill="#900000"><circle cx="653" cy="178" r="1.500" /><circle cx="1253" cy="279" r="2" /><circle cx="1090" cy="648" r="2" /><circle cx="490" cy="548" r="2" /></g>
    <Axes x={689} y={370} tip={false} />
    <Axes x={431} y={649} />
    <circle cx="671" cy="376" r="2" fill="#9a8a00" />
    <g fontSize="10">
      <text x="666" y="370" fill="#a89a00">0.2</text>
      <text x="673" y="404" fill="#00e000">Y</text>
      <text x="687" y="413" fill="#2000d0">Z</text>
      <text x="476" y="661" fill="#f00000">X</text>
      <text x="415" y="683" fill="#00e000">Y</text>
      <text x="428" y="692" fill="#0000c0">Z</text>
      <text x="569" y="359">1</text>
    </g>
  </Canvas>
);

/* ---------- table panel ---------- */
const TablePanel = styled.section`flex: none; margin-top: 6px; background: #f0eeee;`;
const TableTools = styled.div`
  display: flex; align-items: center; height: 25px; padding-left: 8px;
  background: linear-gradient(#e9edf7, #e0e5f0 50%, #cdd3e0);
`;
const Sheet = styled.div`
  display: flex; height: 124px; padding: 2px 2px 0 1px; border-top: 1px solid #6b6b66; border-left: 1px solid #6b6b66; background: #f0f0f0;
`;
const Grid = styled.table`
  flex: 1; width: 0; height: 113px; table-layout: fixed; border-collapse: separate; border-spacing: 0; font: 11px/12px ${ARIAL}; text-align: center;
  border-left: 1px solid #777;
  th, td { padding: 0; font-weight: 400; height: 16px; border-right: 1px solid #a0a0a0; border-bottom: 1px solid #a0a0a0; overflow: hidden; white-space: nowrap; }
  sub { font-size: 10px; line-height: 8px; vertical-align: -1px; margin-left: 1px; }
  sup { font-size: 9px; line-height: 8px; vertical-align: 4px; }
`;
const Letter = styled.th<{ $on?: boolean }>`
  && { height: 15px; border: 1px solid #777; border-left: 0; box-shadow: inset 1px 1px #fff; }
  background: ${(p) => (p.$on ? "#3399ff" : "#e1e1e1")}; color: ${(p) => (p.$on ? "#fff" : "#000")};
`;
const Head = styled.th<{ $bottom?: boolean }>`
  && {
    height: ${(p) => (p.$bottom ? 17 : 16)}px; line-height: 14px;
    border-bottom-color: ${(p) => (p.$bottom ? "#a0a0a0" : "transparent")};
  }
  background: #efefef;
`;
const Corner = styled.th`
  && { padding-top: 10px; border-top: 1px solid #777; border-right-color: #777; white-space: normal; line-height: 13px; }
  background: #e1e1e1;
`;
const RowHead = styled.th<{ $on?: boolean }>`
  && { border-color: #777; box-shadow: inset 1px 1px #fff; }
  background: ${(p) => (p.$on ? "#3399ff" : "#e1e1e1")}; color: ${(p) => (p.$on ? "#fff" : "#000")};
`;
const Cell = styled.td<{ $grey?: boolean; $focus?: boolean }>`
  background: ${(p) => (p.$grey ? "#efefef" : "#fff")};
  ${(p) => p.$focus && "outline: 1px dotted #000; outline-offset: -1px;"}
`;
const Scroll = styled.div`
  flex: none; width: 17px; height: 113px; margin-left: 2px; display: flex; flex-direction: column; background: #f0f0f0; border-right: 1px solid #999;
`;
const ScrollArrow = styled.button<{ $down?: boolean }>`
  display: grid; place-items: center; height: 17px;
  &::after { content: ""; border: 3px solid transparent; border-width: ${(p) => (p.$down ? "3px 3px 0" : "0 3px 3px")}; border-${(p) => (p.$down ? "top" : "bottom")}-color: #333; }
`;
const Thumb = styled.div`
  display: grid; place-items: center; flex: 1; margin-bottom: 2px; border: 1px solid #999; border-radius: 2px;
  background: linear-gradient(90deg, #f4f4f4, #d2d2d2);
  &::after { content: ""; width: 7px; height: 8px; background: repeating-linear-gradient(#555 0 1px, transparent 1px 2px); }
`;
const Tabs = styled.div`display: flex; height: 18px; background: #f0f0f0; border: solid #6b6b66; border-width: 1px 0; font: 11px/16px ${ARIAL};`;
const Tab = styled.button<{ $on?: boolean }>`
  height: 16px; padding: 0 3px; white-space: nowrap; border: solid #555; border-width: 0 1px 1px 0; border-radius: 0 0 4px 1px;
  background: ${(p) => (p.$on ? "#f6f6f6" : "#e1e1e1")}; line-height: ${(p) => (p.$on ? 14 : 16)}px;
`;
const Pager = styled.div`margin-left: auto; display: flex;`;
const PageButton = styled.button`
  display: grid; place-items: center; width: 16px; height: 16px; background: #f0f0f0;
  border: 1px solid #999; border-color: #fff #888 #888 #fff;
`;
const Strip = styled.div`height: 18px;`;

/* ---------- status bar ---------- */
const Status = styled.footer`
  display: flex; justify-content: flex-end; height: 21px; flex: none; padding-top: 2px; overflow: hidden; border-top: 1px solid #9a9eaa;
  background: linear-gradient(#dfe1e7, #b6bac6 45%, #a2a7b3 50%, #b2b6be); font: 11px/16px ${ARIAL}; color: #2c2c34;
`;
const Flag = styled.button<{ $w: number; $off?: boolean }>`
  flex: none; width: ${(p) => p.$w}px; height: 18px; margin-right: 2px; white-space: nowrap; text-align: center; line-height: ${(p) => (p.$off ? 13 : 16)}px;
  border: 1px solid; border-color: ${(p) => (p.$off ? "#e8e8ee #888 #888 #e8e8ee" : "#22222c #fff #fff #22222c")};
`;
const Mode = styled.span`flex: none; width: 150px; padding-left: 1px; white-space: nowrap; line-height: 18px;`;
const Pane = styled.span<{ $w: number }>`
  flex: none; display: flex; align-items: flex-end; justify-content: flex-end; width: ${(p) => p.$w}px; border-left: 1px solid #8c909c;
`;

const menus = ["_File", "_Edit", "_View", "_Insert", "_Calculate", "_Results", "_Tools", "Ta_ble", "_Options", "_Add-on Modules", "_Window", "_Help"];
const cols = [45, 48, 54, 60, 78, 78, 78, 72, 72, 72];
const letters = "ABCDEFGHIJ".split("");
const tabs = ["Nodes", "Lines", "Materials", "Surfaces", "Solids", "Openings", "Nodal Supports", "Line Supports", "Surface Supports", "Line Releases", "Cross-Sections", "Member End Releases"];

const PinClose = () => (
  <TitleButtons>
    <button aria-label="Pin"><svg width="11" height="11">{P("M3.500 1V6M7.500 1V6M3 1.500H8M1 6.500H10M5.500 7V10", "#777")}</svg></button>
    <button aria-label="Close"><svg width="11" height="11">{P("M2 2L9 9M9 2L2 9", "#777", 1.5)}</svg></button>
  </TitleButtons>
);

export default function App() {
  return (
    <Frame>
      <Global />
      <TitleBar>
        <Icon name="logo" />
        <TitleText>RFEM 5.02.0048 (64bit) - [0085, RC2]</TitleText>
        <WinButtons>
          <WinButton aria-label="Minimize"><svg width="13" height="6">{R(0.5, 1.5, 11, 3, "#fff", "#556")}</svg></WinButton>
          <WinButton aria-label="Maximize"><svg width="13" height="10">{R(0.5, 0.5, 11, 8, "#fff", "#556")}{R(4, 3, 4, 3, "#ddd", "#556")}</svg></WinButton>
          <WinButton $close aria-label="Close window"><svg width="13" height="10">{P("M2 1L10 9M10 1L2 9", "#555", 4)}{P("M2 1L10 9M10 1L2 9", "#fff", 2)}</svg></WinButton>
        </WinButtons>
      </TitleBar>
      <Client>
        <MenuBar>
          <Grip />
          <MenuIcon viewBox="0 0 16 14">{R(0, 0, 16, 14, "#1b2f78")}{P("M0 9.500H16M4.500 2V12M11.500 4V12M0 8L4.500 3L11 9M11.500 5L15 9", "#fff")}</MenuIcon>
          {menus.map((m) => {
            const k = m.indexOf("_");
            return <MenuItem key={m}>{m.slice(0, k)}<u>{m[k + 1]}</u>{m.slice(k + 2)}</MenuItem>;
          })}
          <MdiButtons>
            <button aria-label="Minimize view"><svg width="14" height="12">{P("M4 10H10", "#888", 2)}</svg></button>
            <button aria-label="Restore view"><svg width="14" height="12">{P("M5 4V2.500H11.500V7H10M3.500 4.500H9.500V9.500H3.500ZM3 5H10", "#888")}</svg></button>
            <button aria-label="Close view"><svg width="14" height="12">{P("M4 2L11 10M11 2L4 10", "#888", 2)}</svg></button>
          </MdiButtons>
        </MenuBar>
        <ToolRow>
          <ToolGroup>
            <Grip />
            <Tools items="New,Open,Project manager,Block manager,Save,Project details,Print,Preview,|,Undo,Redo,|,Select plane,Select ellipse,Select ring,Add to selection,Selection window,|,*Navigator,*Tables,|,New load case" />
            <CaseBox><CaseSelect aria-label="Load case"><option>RC2 - 1.35*LC1/p + 1.5*LC2 or to LC4</option></CaseSelect></CaseBox>
            <Tools items="Previous,Next,Show loads,Show load values,*Show results,*Show result values,|,Results glasses,Calculation,Calculate all" />
          </ToolGroup>
          <ToolGroup>
            <Grip />
            <Tools items="Work plane,Grid,*Plane XY,Plane YZ,Plane XZ,Object snap,Settings,|,Move copy,Rotate,Mirror,Scale,Info,Edit card,Gears" />
          </ToolGroup>
          <ToolGroup $cut><Grip /><Tools items="Pan,Zoom window,Zoom all,Isometric,View X" /></ToolGroup>
          <ToolGroup $rest><Grip /><Tools items="Monitor,Report" /></ToolGroup>
        </ToolRow>
        <ToolRow $last>
          <ToolGroup>
            <Grip />
            <Tools items="Node,v,Line,Member,v,Polyline,v,|,Nodal support,Line support,Surface support,|,Dimension,v,Comment,Guideline,|,Surface,v,Opening,v,Curved surface,v,Solid,Extrude,v,|,Connect,v,Nodal load,Member load,Surface load,Solid load,Free load,v" />
          </ToolGroup>
          <ToolGroup>
            <Grip />
            <Tools items="*Deformations,Animation,|,Internal forces,Surface results,Solid results,Support reactions,Sections,Values,v,Result diagram,Result tables,|,*Panel,Result settings,v,Color scale,v" />
          </ToolGroup>
        </ToolRow>
        <Main>
          <Side>
            <PanelTitle><span>Project Navigator - Results</span><PinClose /></PanelTitle>
            <TreeBox><Tree>{tree.map((n, i) => <TreeRow key={i} node={n} i={i} />)}</Tree></TreeBox>
            <SideTabs>
              <SideTab><Icon name="data" />Data</SideTab>
              <SideTab><Icon name="display" />Display</SideTab>
              <SideTab><Icon name="views" />Views</SideTab>
              <SideTab $on><Icon name="surf" />Results</SideTab>
            </SideTabs>
          </Side>
          <Work>
            <View>
              <Plot />
              <Note>{"Visibility mode\nGlobal Deformations u [mm]\nRC2 : 1.35*LC1/p + 1.5*LC2 or to LC4"}</Note>
              <Note $bottom>Max u: 0.2, Min u: 0.0 mm</Note>
            </View>
            <TablePanel>
              <PanelTitle $dark><span>1.10 Line Releases</span><PinClose /></PanelTitle>
              <TableTools>
                <Tools items="*View mode,Insert row,Sort,Diagram,|,Previous table,Next table,|,*Sync selection,*Sync view,Refresh,|,Add,Cross,Divide,|,Clear,|,Delete row,Move left,Move right,|,Highlight,Filter,|,Edit note,|,Properties,View glasses,Excel,Calculator,|,Rename,Function,Delete function" />
              </TableTools>
              <Sheet>
                <Grid>
                  <colgroup>{cols.map((w, i) => <col key={i} width={w} />)}<col /></colgroup>
                  <thead>
                    <tr><Corner rowSpan={3}>Release<br />No.</Corner>{letters.map((l) => <Letter key={l} $on={l === "A"}>{l}</Letter>)}</tr>
                    <tr>
                      <Head>Line</Head><Head>Surface</Head><Head />
                      <Head colSpan={3}>Axial/Shear Release or Spring [kN/m<sup>2</sup>]</Head>
                      <Head colSpan={3}>Moment Release or Spring [kNm/rad/m]</Head><Head />
                    </tr>
                    <tr>
                      <Head $bottom>No.</Head><Head $bottom>No.</Head><Head $bottom>Side</Head>
                      {["ux", "uy", "uz", "φx", "φy", "φz"].map((h) => <Head $bottom key={h}>{h[0]}<sub>{h[1]}</sub></Head>)}
                      <Head $bottom>Comment</Head>
                    </tr>
                  </thead>
                  <tbody>
                    {[1, 2, 3, 4].map((r) => (
                      <tr key={r}>
                        <RowHead $on={r === 1}>{r}</RowHead>
                        {letters.map((l) => <Cell key={l} $grey={l === "J"} $focus={r === 1 && l === "A"} />)}
                      </tr>
                    ))}
                  </tbody>
                </Grid>
                <Scroll><ScrollArrow aria-label="Scroll up" /><Thumb /><ScrollArrow $down aria-label="Scroll down" /></Scroll>
              </Sheet>
              <Tabs>
                {tabs.map((t) => <Tab key={t} $on={t === "Line Releases"}>{t}</Tab>)}
                <Pager>
                  <PageButton aria-label="First"><svg width="9" height="9">{R(0, 1, 2, 7, "#999")}{F("M8 1V8L4 4.500Z", "#999")}</svg></PageButton>
                  <PageButton aria-label="Back"><svg width="9" height="9">{F("M6 1V8L2 4.500Z", "#999")}</svg></PageButton>
                  <PageButton aria-label="Forward"><svg width="9" height="9">{F("M3 1V8L7 4.500Z", "#000")}</svg></PageButton>
                  <PageButton aria-label="Last"><svg width="9" height="9">{F("M1 1V8L5 4.500Z", "#000")}{R(7, 1, 2, 7, "#000")}</svg></PageButton>
                </Pager>
              </Tabs>
              <Strip />
            </TablePanel>
          </Work>
        </Main>
        <Status>
          <Flag $w={35}>SNAP</Flag><Flag $w={34} $off>GRID</Flag><Flag $w={50}>CARTES</Flag><Flag $w={44}>OSNAP</Flag>
          <Flag $w={44}>GLINES</Flag><Flag $w={28}>DXF</Flag>
          <Mode>Visibility Mode</Mode>
          <Pane $w={88} /><Pane $w={74} /><Pane $w={74} />
          <Pane $w={92}>
            <svg width="12" height="12">{[[9, 1], [5, 5], [9, 5], [1, 9], [5, 9], [9, 9]].map(([x, y]) => <rect key={`${x}-${y}`} x={x} y={y} width="2" height="2" fill="#666a76" />)}</svg>
          </Pane>
        </Status>
      </Client>
    </Frame>
  );
}
